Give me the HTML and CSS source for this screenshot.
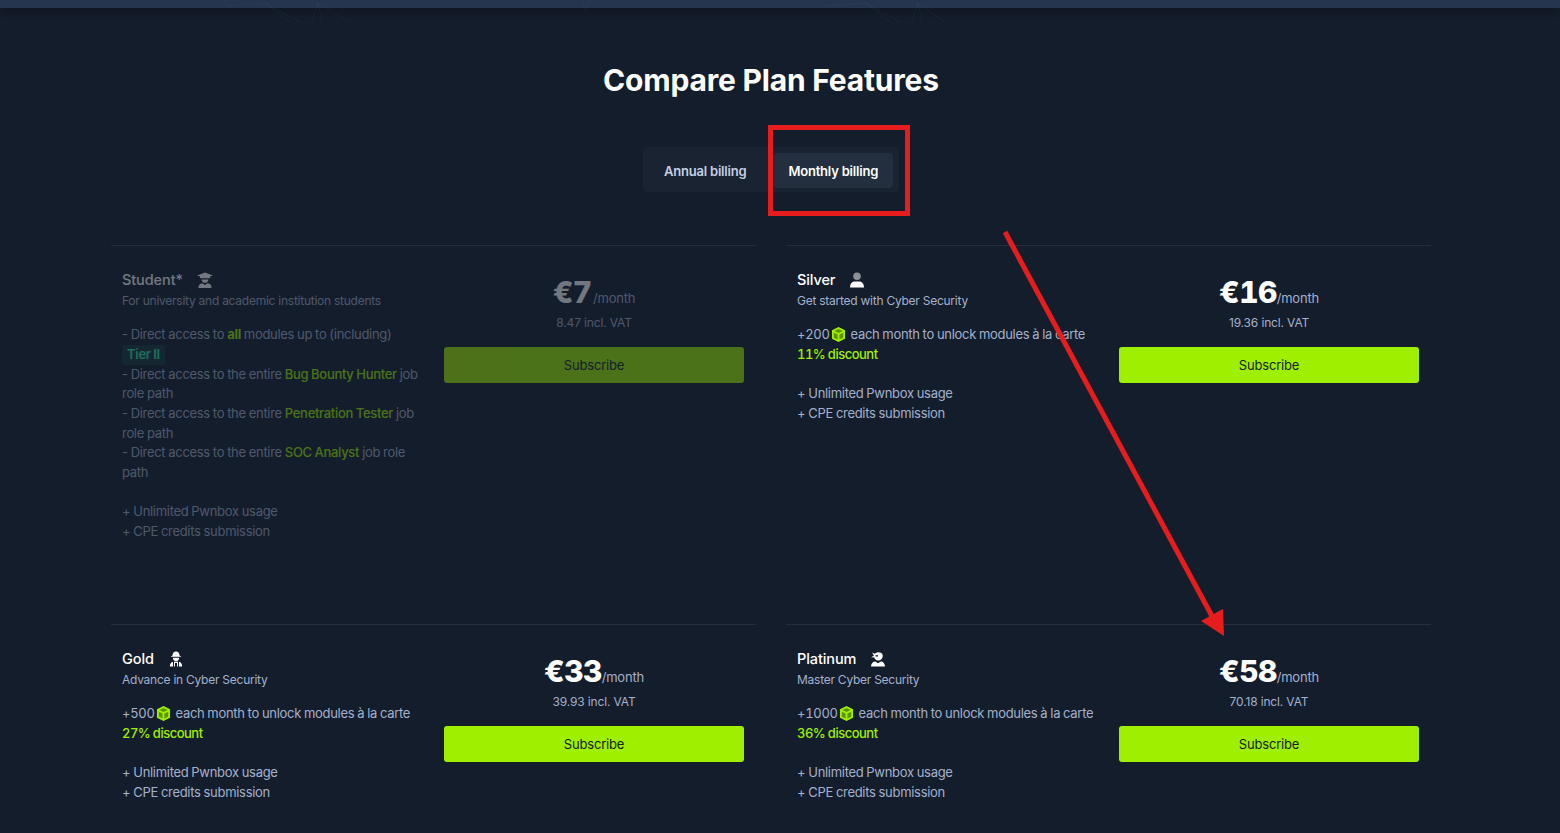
FILE: index.html
```html
<!DOCTYPE html>
<html lang="en">
<head>
    <meta charset="UTF-8">
    <meta name="viewport" content="width=device-width, initial-scale=1.0">
    <title>Compare Plan Features</title>
    <link rel="stylesheet" href="styles.css">
</head>
<body>

<div class="top-strip"></div>

<!-- faint network lines of the hero above, they run past the strip -->
<svg class="strip-lines" viewBox="0 0 1560 24">
    <path d="M225 6 265 3 290 22M265 3 300 22M318 3 312 22M318 3 322 22M318 3 350 22M223 6 226 0M582 0 586 12M590 0 586 12M826 6 866 3 890 22M866 3 900 22M918 3 912 22M918 3 922 22M918 3 944 22"/>
</svg>

<div class="container">
    <h1 class="title">Compare Plan Features</h1>

    <div class="toggle-wrap">
        <div class="toggle">
            <span class="toggle-item">Annual billing</span>
            <span class="toggle-item active">Monthly billing</span>
        </div>
    </div>

    <div class="plans">
        <!-- Student -->
        <div class="plan faded">
            <div class="plan-info">
                <div class="plan-name">Student*
                    <svg class="plan-icon" viewBox="0 0 16 16"><path fill="#fff" d="M0 3.400 8 .6l8 2.800-3 1.200v1.600H3V4.600z"/><path fill="#fff" d="M4.600 7.400h6.800C11.200 9.600 9.800 10.800 8 10.800S4.800 9.600 4.600 7.400z"/><path fill="#fff" d="M1.400 16c0-3 1.800-4.600 3.800-4.800L8 13l2.800-1.800c2 .2 3.800 1.800 3.800 4.800z"/></svg>
                </div>
                <div class="plan-desc">For university and academic institution students</div>
                <div class="plan-text">
                    - Direct access to <b class="green">all</b> modules up to (including) <span class="tier">Tier II</span><br>
                    - Direct access to the entire <span class="green">Bug Bounty Hunter</span> job role path<br>
                    - Direct access to the entire <span class="green">Penetration Tester</span> job role path<br>
                    - Direct access to the entire <span class="green">SOC Analyst</span> job role path<br>
                    <br>
                    + Unlimited Pwnbox usage<br>
                    + CPE credits submission
                </div>
            </div>
            <div class="plan-price">
                <div class="price"><span class="amount">€7</span> <span class="per">/month</span></div>
                <div class="vat">8.47 incl. VAT</div>
                <button class="subscribe">Subscribe</button>
            </div>
        </div>

        <!-- Silver -->
        <div class="plan">
            <div class="plan-info">
                <div class="plan-name">Silver
                    <svg class="plan-icon" viewBox="0 0 16 16"><circle cx="8" cy="4.200" r="3.800" fill="#8b8f96"/><path fill="#fff" d="M1 15.600c0-4 2.400-6 4.600-6h4.800c2.200 0 4.600 2 4.600 6z"/></svg>
                </div>
                <div class="plan-desc">Get started with Cyber Security</div>
                <div class="plan-text">
                    <span class="credits">+200</span><svg class="cube" viewBox="0 0 16 16"><path fill="#9fef00" d="M8 0 15 3.500v9L8 16 1 12.500v-9z"/><path fill="#5f9400" d="M8 2.200 12.300 4.300 8 6.400 3.700 4.300zM3 6l4 2v5.400l-4-2zM13 6 9 8v5.400l4-2z"/></svg> each month to unlock modules à la carte<br>
                    <span class="discount">11% discount</span><br>
                    <br>
                    + Unlimited Pwnbox usage<br>
                    + CPE credits submission
                </div>
            </div>
            <div class="plan-price">
                <div class="price"><span class="amount">€16</span><span class="per">/month</span></div>
                <div class="vat">19.36 incl. VAT</div>
                <button class="subscribe">Subscribe</button>
            </div>
        </div>

        <!-- Gold -->
        <div class="plan">
            <div class="plan-info">
                <div class="plan-name">Gold
                    <svg class="plan-icon" viewBox="0 0 16 16"><path fill="#fff" d="M4.500 4.500C4.500 2 6 .5 8 .5s3.500 1.500 3.500 4l2 1.200H2.500z"/><path fill="#fff" d="M4.800 6.800h6.400c0 2.200-1.400 3.400-3.200 3.400S4.800 9 4.800 6.800z"/><path fill="#fff" d="M1.800 15.600c0-3 1.400-4.600 3.200-4.900v4.900zM6 10.800h4v4.800H9V12H7v3.600H6zM11 10.700c1.800.3 3.200 1.900 3.200 4.900H11z"/></svg>
                </div>
                <div class="plan-desc">Advance in Cyber Security</div>
                <div class="plan-text">
                    <span class="credits">+500</span><svg class="cube" viewBox="0 0 16 16"><path fill="#9fef00" d="M8 0 15 3.500v9L8 16 1 12.500v-9z"/><path fill="#5f9400" d="M8 2.200 12.300 4.300 8 6.400 3.700 4.300zM3 6l4 2v5.400l-4-2zM13 6 9 8v5.400l4-2z"/></svg> each month to unlock modules à la carte<br>
                    <span class="discount">27% discount</span><br>
                    <br>
                    + Unlimited Pwnbox usage<br>
                    + CPE credits submission
                </div>
            </div>
            <div class="plan-price">
                <div class="price"><span class="amount">€33</span><span class="per">/month</span></div>
                <div class="vat">39.93 incl. VAT</div>
                <button class="subscribe">Subscribe</button>
            </div>
        </div>

        <!-- Platinum -->
        <div class="plan">
            <div class="plan-info">
                <div class="plan-name">Platinum
                    <svg class="plan-icon" viewBox="0 0 16 16"><path fill="#fff" d="M2 1.500 5 2.800C6 .8 12.500.3 12.700 4.500c.2 3.400-2.300 5-4.700 5-1.800 0-3.300-1.200-3.900-3.200L1 6.500l3-2z"/><path fill="#141d2b" d="M5.500 4.200h2.500v1.300H5.500z"/><path fill="#fff" d="M1 15.600c0-3.200 2-5.200 4.200-5.200L8 12.200l2.800-1.800c2.200 0 4.200 2 4.200 5.200z"/></svg>
                </div>
                <div class="plan-desc">Master Cyber Security</div>
                <div class="plan-text">
                    <span class="credits">+1000</span><svg class="cube" viewBox="0 0 16 16"><path fill="#9fef00" d="M8 0 15 3.500v9L8 16 1 12.500v-9z"/><path fill="#5f9400" d="M8 2.200 12.300 4.300 8 6.400 3.700 4.300zM3 6l4 2v5.400l-4-2zM13 6 9 8v5.400l4-2z"/></svg> each month to unlock modules à la carte<br>
                    <span class="discount">36% discount</span><br>
                    <br>
                    + Unlimited Pwnbox usage<br>
                    + CPE credits submission
                </div>
            </div>
            <div class="plan-price">
                <div class="price"><span class="amount">€58</span><span class="per">/month</span></div>
                <div class="vat">70.18 incl. VAT</div>
                <button class="subscribe">Subscribe</button>
            </div>
        </div>
    </div>
</div>

<!-- red annotation drawn over the page -->
<svg class="annotation" viewBox="0 0 1560 833">
    <rect x="770.500" y="127.500" width="137" height="86" fill="none" stroke="#e71d1d" stroke-width="5"/>
    <path d="M1005 232 1213 618" stroke="#e71d1d" stroke-width="5" fill="none"/>
    <path d="M1201 621 1223 609 1224 636z" fill="#e71d1d"/>
</svg>

</body>
</html>
```

FILE: styles.css
```css
/* Basic styling for the page */
body {
    font-family: Inter, "Liberation Sans", sans-serif;
    background-color: #141d2b;
    color: #a4b1cd;
    margin: 0;
    height: 833px;
    overflow: hidden;
}

.top-strip {
    height: 8px;
    background: #25344f;
    box-shadow: 0px 3px 9px rgba(0, 0, 0, 0.3);
}

.strip-lines {
    position: absolute;
    top: 0;
    left: 0;
    width: 1560px;
    height: 24px;
}

.strip-lines path {
    fill: none;
    stroke: rgba(164, 177, 205, 0.05);
    stroke-width: 1;
}

/* page centre is 771, the shot had a scrollbar gutter */
.container {
    width: 1320px;
    margin-left: 111px;
}

.title {
    margin: 52px 0 0;
    font-size: 30px;
    line-height: 40px;
    font-weight: 700;
    letter-spacing: -0.2px;
    color: #ffffff;
    text-align: center;
}

.toggle-wrap {
    display: flex;
    justify-content: center;
    margin-top: 47px;
}

.toggle {
    display: flex;
    align-items: center;
    gap: 12px;
    height: 45px;
    padding: 0 6px;
    background: #1a2332;
    border-radius: 4px;
}

.toggle-item {
    height: 35px;
    margin-top: 2px;
    font-size: 13px;
    font-weight: 600;
    line-height: 37px;
    padding: 0 15px;
    border-radius: 4px;
    letter-spacing: -0.2px;
    color: #c5cfe4;
}

.toggle-item.active {
    color: #ffffff;
    background: #232e3f;
}

.plans {
    display: grid;
    grid-template-columns: 645px 645px;
    grid-template-rows: 379px auto;
    column-gap: 30px;
    margin-top: 53px;
}

.plan {
    display: grid;
    grid-template-columns: 1fr 300px;
    column-gap: 22px;
    padding: 24px 12px 0 11px;
    border-top: 1px solid #222d3d;
}

.plan.faded > div {
    opacity: 0.4;
}

.plan-name {
    display: flex;
    align-items: center;
    gap: 14px;
    font-size: 14.5px;
    line-height: 20px;
    font-weight: 500;
    letter-spacing: -0.1px;
    color: #ffffff;
}

.plan-icon {
    width: 16px;
    height: 16px;
}

.plan-desc {
    margin-top: 1px;
    font-size: 12px;
    line-height: 20px;
    letter-spacing: -0.25px;
}

.plan-text {
    margin-top: 14.15px;
    font-size: 13px;
    line-height: 19.7px;
    letter-spacing: -0.3px;
    word-spacing: -0.4px;
}

.credits {
    font-variant-numeric: tabular-nums;
}

.green {
    color: #9fef00;
    font-weight: 500;
}

b.green {
    font-weight: 700;
}

.tier {
    display: inline-block;
    padding: 0 5px;
    font-weight: 600;
    color: #2ee6a6;
    background: rgba(46, 230, 166, 0.15);
    border-radius: 3px;
}

.cube {
    width: 15px;
    height: 15px;
    margin: 0 2px 0 1px;
    vertical-align: -3px;
}

.discount {
    color: #9fef00;
    font-weight: 500;
    letter-spacing: -0.5px;
    font-variant-numeric: tabular-nums;
}

.plan-price {
    text-align: center;
}

.price {
    line-height: 36px;
    margin-top: 4px;
    word-spacing: -3px;
}

.amount {
    font-size: 30px;
    font-weight: 800;
    letter-spacing: -0.6px;
    font-variant-numeric: tabular-nums;
    color: #ffffff;
}

.per {
    font-size: 13px;
    letter-spacing: -0.2px;
}

.vat {
    font-size: 12px;
    line-height: 20px;
    margin-top: -3px;
    letter-spacing: -0.15px;
}

.subscribe {
    display: block;
    width: 100%;
    height: 36.5px;
    margin-top: 13.6px;
    border: none;
    border-radius: 3px;
    background-color: #9fef00;
    color: #141d2b;
    font-family: inherit;
    font-size: 13px;
    letter-spacing: -0.2px;
}

.annotation {
    position: absolute;
    top: 0;
    left: 0;
    width: 1560px;
    height: 833px;
    pointer-events: none;
}
```
